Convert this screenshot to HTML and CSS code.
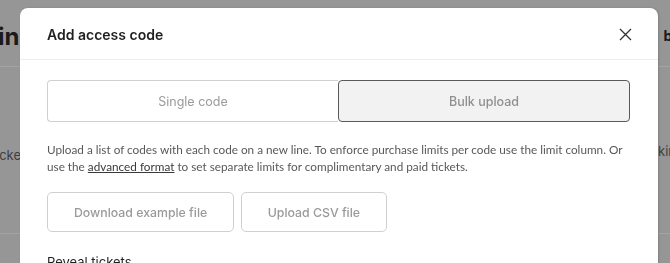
FILE: index.html
```html
<!DOCTYPE html>
<html>
<head>
<meta charset="utf-8">
<link rel="stylesheet" href="styles.css">
</head>
<body>
<div class="page">
  <div class="page-head">
    <span class="page-title">in</span>
    <span class="page-tab">bl</span>
  </div>
  <div class="page-row">
    <span class="page-text">icke</span>
    <span class="page-text">kin</span>
  </div>
</div>
<div class="overlay">
  <div class="modal">
    <div class="modal-head">
      <h2 class="modal-title">Add access code</h2>
      <button class="close" aria-label="Close">
        <svg width="13" height="13" viewBox="0 0 13 13"><path d="M1 1L12 12M12 1L1 12" stroke="#333" stroke-width="1.3" fill="none"/></svg>
      </button>
    </div>
    <div class="modal-body">
      <div class="segmented">
        <button class="seg">Single code</button>
        <button class="seg seg-active">Bulk upload</button>
      </div>
      <p class="desc">Upload a list of codes with each code on a new line. To enforce purchase limits per code use the limit column. Or use the <a href="#" class="link">advanced format</a> to set separate limits for complimentary and paid tickets.</p>
      <div class="actions">
        <button class="btn btn-wide">Download example file</button>
        <button class="btn">Upload CSV file</button>
      </div>
      <div class="section-label">Reveal tickets</div>
    </div>
  </div>
</div>
</body>
</html>
```
FILE: styles.css
```css
html, body {
  margin: 0;
  padding: 0;
  height: 100%;
  overflow: hidden;
}
body {
  background: #969696;
  font-family: Inter, "Noto Sans", sans-serif;
}
.page {
  height: 100%;
  display: flex;
  flex-direction: column;
}
.page-head {
  height: 66px;
  border-bottom: 1px solid #a3a3a3;
  display: flex;
  justify-content: space-between;
  align-items: center;
}
.page-title {
  font-size: 24px;
  font-weight: 700;
  color: #1a1a1a;
  margin-left: -2px;
  margin-top: 6px;
}
.page-tab {
  font-size: 14px;
  font-weight: 700;
  color: #1a1a1a;
  margin-right: -6px;
  margin-top: 4px;
}
.page-row {
  display: flex;
  justify-content: space-between;
  padding-top: 80px;
  font-size: 13px;
  color: #3e3e3e;
  height: 86px;
  border-bottom: 1px solid #a3a3a3;
}
.page-text:first-child { margin-left: -4px; }
.page-text:last-child { margin-right: -6px; margin-top: -4px; }
.overlay {
  position: fixed;
  inset: 0;
  padding: 8px 12px 0 20px;
}
.modal {
  width: 638px;
  height: 600px;
  background: #fff;
  border-radius: 8px;
  box-shadow: 1px 0 2px rgba(0,0,0,0.15);
}
.modal-head {
  height: 52px;
  border-bottom: 1px solid #eeeeee;
  display: flex;
  align-items: center;
  justify-content: space-between;
  padding: 2px 26px 0 27px;
  box-sizing: border-box;
}
.modal-title {
  margin: 0;
  font-size: 14px;
  font-weight: 600;
  color: #1f1f1f;
}
.close {
  border: 0;
  background: none;
  padding: 0;
  width: 13px;
  height: 13px;
  display: flex;
}
.modal-body {
  padding: 20px 28px 0 27px;
}
.segmented {
  display: flex;
  height: 42px;
}
.seg {
  flex: 1;
  font-family: inherit;
  font-size: 12.5px;
  color: #9a9a9a;
  background: #fff;
  border: 1px solid #d0d0d0;
  border-radius: 4px 0 0 4px;
  border-right: 0;
  padding-top: 1px;
}
.seg-active {
  background: #f2f2f2;
  border: 1.5px solid #5a5a5a;
  border-radius: 4px;
  font-weight: 500;
  color: #8f8f8f;
}
.desc {
  margin: 19px 0 0;
  font-family: Lato, "Noto Sans", sans-serif;
  font-size: 11.75px;
  line-height: 17px;
  color: #585858;
}
.link {
  color: #3a3a3a;
  text-decoration: underline;
}
.actions {
  display: flex;
  gap: 7px;
  margin-top: 17px;
}
.btn {
  height: 40px;
  padding: 0 25.5px;
  font-family: inherit;
  font-size: 12.3px;
  font-weight: 500;
  color: #9a9a9a;
  background: #fff;
  border: 1px solid #d0d0d0;
  border-radius: 5px;
}
.btn-wide {
  padding: 0 26px;
}
.section-label {
  margin-top: 22px;
  font-size: 13px;
  color: #1f1f1f;
}
```
